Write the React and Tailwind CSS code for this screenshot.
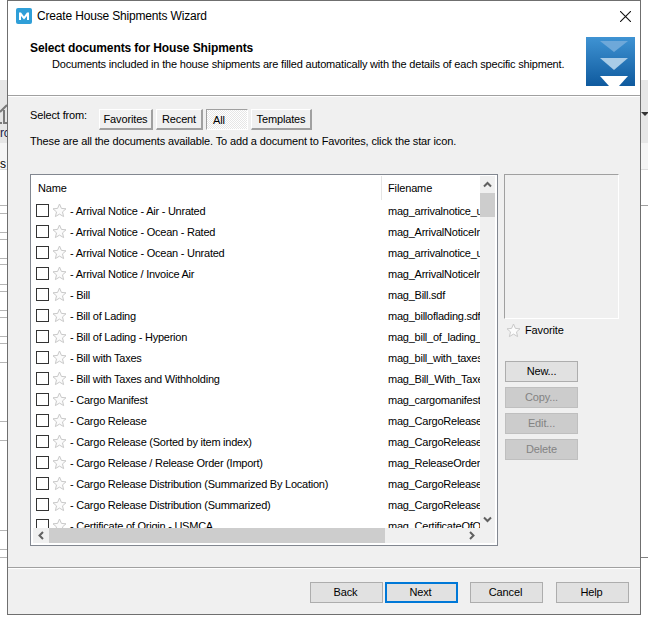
import React from 'react';

const rows = [
  ['Arrival Notice - Air - Unrated', 'mag_arrivalnotice_unrated.sdf'],
  ['Arrival Notice - Ocean - Rated', 'mag_ArrivalNoticeInvoice.sdf'],
  ['Arrival Notice - Ocean - Unrated', 'mag_arrivalnotice_unrated.sdf'],
  ['Arrival Notice / Invoice Air', 'mag_ArrivalNoticeInvoice.sdf'],
  ['Bill', 'mag_Bill.sdf'],
  ['Bill of Lading', 'mag_billoflading.sdf'],
  ['Bill of Lading - Hyperion', 'mag_bill_of_lading_hyperion.sdf'],
  ['Bill with Taxes', 'mag_bill_with_taxes.sdf'],
  ['Bill with Taxes and Withholding', 'mag_Bill_With_Taxes.sdf'],
  ['Cargo Manifest', 'mag_cargomanifest.sdf'],
  ['Cargo Release', 'mag_CargoRelease.sdf'],
  ['Cargo Release (Sorted by item index)', 'mag_CargoRelease.sdf'],
  ['Cargo Release / Release Order (Import)', 'mag_ReleaseOrder.sdf'],
  ['Cargo Release Distribution (Summarized By Location)', 'mag_CargoRelease.sdf'],
  ['Cargo Release Distribution (Summarized)', 'mag_CargoRelease.sdf'],
  ['Certificate of Origin - USMCA', 'mag_CertificateOfOrigin.sdf'],
];

const leftLines = [205, 213, 232, 239, 258, 264, 284, 291, 310, 317, 336, 343, 362, 421, 440, 530, 549, 557];

function Star({ className }) {
  return (
    <svg viewBox="0 0 15 15" className={className} fill="#fbfbfb" stroke="#c9c9c9" strokeWidth="1">
      <path d="M7.5 1 L9.4 5.4 L14 5.8 L10.5 8.9 L11.6 13.6 L7.5 11.1 L3.4 13.6 L4.5 8.9 L1 5.8 L5.6 5.4 Z" />
    </svg>
  );
}

function Chevron({ d, className }) {
  return (
    <svg viewBox="0 0 9 9" className={className} fill="none" stroke="#606060" strokeWidth="2">
      <path d={d} />
    </svg>
  );
}

function TabButton({ label, width, active }) {
  if (active) {
    return (
      <div
        className={`h-[21px] ${width} flex items-center pl-[6px] pt-[2px] border-t border-l border-[#a0a0a0] border-r-white border-b-white border-r border-b bg-[repeating-conic-gradient(#e6e6e6_0_25%,#ffffff_0_50%)] bg-[length:2px_2px]`}
      >
        {label}
      </div>
    );
  }
  return (
    <div className={`h-[21px] ${width} flex items-center justify-center border-t border-l border-white border-r-[#a0a0a0] border-b-[#a0a0a0] border-r-2 border-b-2 bg-[#f0f0f0]`}>
      {label}
    </div>
  );
}

function SideButton({ label, disabled }) {
  return (
    <div
      className={
        disabled
          ? 'w-[73px] h-[21px] flex items-center justify-center border border-[#bfbfbf] bg-[#cccccc] text-[#838383]'
          : 'w-[73px] h-[21px] flex items-center justify-center border border-[#adadad] bg-[#e1e1e1]'
      }
    >
      {label}
    </div>
  );
}

function FooterButton({ label, focused }) {
  return (
    <div
      className={
        focused
          ? 'w-[73px] h-[21px] flex items-center justify-center pr-[2px] border-2 border-[#0078d7] bg-[#e1e1e1]'
          : 'w-[73px] h-[21px] flex items-center justify-center pr-[2px] border border-[#adadad] bg-[#e1e1e1]'
      }
    >
      {label}
    </div>
  );
}

export default function App() {
  return (
    <div className="relative w-[648px] h-[622px] overflow-hidden bg-white text-[11px] tracking-[-0.14px] text-black font-['Liberation_Sans',sans-serif]">
      {/* app behind the dialog */}
      <div className="absolute left-0 top-[80px] w-full h-[63px] bg-[#e6e6e6]" />
      <div className="absolute left-0 top-[143px] w-full h-[27px] bg-[#f5f5f5] border-b border-[#dddddd]" />
      <div className="absolute left-[640px] top-[205px] w-[8px] h-px bg-[#a0a0a0]" />
      <div className="absolute left-[640px] top-[557px] w-[8px] h-px bg-[#808080]" />
      <div className="absolute left-[641px] top-[112px] w-0 h-0 border-x-[4px] border-x-transparent border-t-[4px] border-t-[#333333]" />
      <svg viewBox="0 0 7 30" className="absolute left-0 top-[98px] w-[7px] h-[30px]" fill="none" stroke="#7a7a7a" strokeWidth="2">
        <path d="M0 14 L7 7 M4 12 V25 H7 M0 25 H2" />
      </svg>
      <div className="absolute left-0 top-[124px] text-[12px] text-[#1a1a4a]">rc</div>
      <div className="absolute left-0 top-[155px] text-[12px]">s</div>
      {leftLines.map((y) => (
        <div key={y} className="absolute left-0 w-[7px] h-px bg-[#b5b5b5]" style={{ top: y }} />
      ))}

      {/* dialog */}
      <div className="absolute left-[7px] top-0 w-[634px] h-[615px] border border-[#6f6f6f] bg-[#f0f0f0] flex flex-col">
        <div className="h-[95px] bg-white border-b border-[#a0a0a0] shrink-0 flex flex-col">
          <div className="h-[30px] flex items-center pl-[8px] pr-[9px] shrink-0">
            <svg viewBox="0 0 16 16" className="w-[16px] h-[16px] mr-[5px]">
              <rect width="16" height="16" rx="2" fill="#2f9fd8" />
              <path d="M3 12 V4.5 H5 L8 8.5 L11 4.5 H13 V12 H11 V8 L8 11.5 L5 8 V12 Z" fill="#ffffff" />
            </svg>
            <span className="flex-1 text-[12px] tracking-[-0.17px]">Create House Shipments Wizard</span>
            <svg viewBox="0 0 10 10" className="w-[11px] h-[11px]" stroke="#111111" strokeWidth="1" fill="none">
              <path d="M0 0 L10 10 M10 0 L0 10" />
            </svg>
          </div>
          <div className="flex pl-[22px] pr-[5px]">
            <div className="flex-1 pt-[10px]">
              <div className="font-bold text-[12px] tracking-[-0.1px] leading-[15px]">Select documents for House Shipments</div>
              <div className="pl-[22px] mt-[1px] leading-[15px] whitespace-nowrap tracking-[-0.19px]">
                Documents included in the house shipments are filled automatically with the details of each specific shipment.
              </div>
            </div>
            <svg viewBox="0 0 49 49" className="w-[49px] h-[49px] mt-[6px] shrink-0">
              <defs>
                <linearGradient id="ship" x1="0" y1="0" x2="0" y2="1">
                  <stop offset="0" stopColor="#3f93d3" />
                  <stop offset="1" stopColor="#0f5a9e" />
                </linearGradient>
              </defs>
              <rect width="49" height="49" fill="url(#ship)" />
              <path d="M14 4 H42 L28 15 Z" fill="#6ea8d9" />
              <path d="M14 21 H42 L28 33 Z" fill="#a9cce7" />
              <path d="M14 39 H42 L33 49 H23 Z" fill="#ffffff" />
            </svg>
          </div>
        </div>

        <div className="flex-1 border-t border-white pl-[22px] pr-[20px] pt-[12px] min-h-0">
          <div className="flex h-[21px]">
            <div className="w-[69px] leading-[13px]">Select from:</div>
            <div className="flex gap-[3px]">
              <TabButton label="Favorites" width="w-[54px]" />
              <TabButton label="Recent" width="w-[47px]" />
              <TabButton label="All" width="w-[42px]" active />
              <TabButton label="Templates" width="w-[61px]" />
            </div>
          </div>
          <div className="mt-[4px] leading-[15px]">
            These are all the documents available. To add a document to Favorites, click the star icon.
          </div>

          <div className="flex mt-[25px]">
            <div className="w-[468px] h-[372px] border border-[#828790] p-[1px] bg-white flex flex-col">
              <div className="flex min-h-0 flex-1">
                <div className="flex-1 min-w-0 flex flex-col overflow-hidden">
                  <div className="h-[24px] flex shrink-0">
                    <div className="w-[350px] pl-[6px] flex items-center border-r border-[#e5e5e5]">Name</div>
                    <div className="pl-[6px] flex items-center">Filename</div>
                  </div>
                  <div className="flex-1 overflow-hidden pt-px tracking-[-0.24px]">
                    {rows.map(([name, file]) => (
                      <div key={name} className="h-[21px] flex items-center whitespace-nowrap">
                        <div className="w-[350px] flex items-center pl-[4px] shrink-0">
                          <span className="w-[13px] h-[13px] border border-[#333333] bg-white shrink-0 -mt-[2px]" />
                          <Star className="w-[15px] h-[15px] ml-[3px] mr-[3px] shrink-0 -mt-[3px]" />
                          <span>- {name}</span>
                        </div>
                        <div className="pl-[6px] overflow-hidden flex-1">{file}</div>
                      </div>
                    ))}
                  </div>
                </div>
                <div className="w-[15px] bg-[#f0f0f0] mr-[1px] shrink-0 flex flex-col items-center">
                  <div className="h-[17px] flex items-center justify-center">
                    <Chevron d="M1 6.5 L4.5 3 L8 6.5" className="w-[9px] h-[9px]" />
                  </div>
                  <div className="w-full h-[24px] bg-[#cdcdcd]" />
                  <div className="flex-1" />
                  <div className="h-[17px] flex items-center justify-center">
                    <Chevron d="M1 2.5 L4.5 6 L8 2.5" className="w-[9px] h-[9px]" />
                  </div>
                </div>
              </div>
              <div className="h-[15px] mb-[1px] ml-[1px] mr-[1px] bg-[#f0f0f0] shrink-0 flex items-center">
                <div className="w-[16px] flex justify-center">
                  <Chevron d="M6 1 L2.5 4.5 L6 8" className="w-[9px] h-[9px]" />
                </div>
                <div className="w-[336px] h-full bg-[#cdcdcd]" />
                <div className="flex-1" />
                <div className="w-[18px] mr-[15px] flex justify-center">
                  <Chevron d="M3 1 L6.5 4.5 L3 8" className="w-[9px] h-[9px]" />
                </div>
              </div>
            </div>

            <div className="ml-[6px] w-[115px]">
              <div className="h-[145px] border-t border-l border-[#a0a0a0] border-r-white border-b-white border-r border-b" />
              <div className="flex items-center pl-[2px] mt-[4px] h-[15px]">
                <Star className="w-[15px] h-[15px] mr-[4px]" />
                Favorite
              </div>
              <div className="flex flex-col gap-[5px] mt-[23px] pl-[1px]">
                <SideButton label="New..." />
                <SideButton label="Copy..." disabled />
                <SideButton label="Edit..." disabled />
                <SideButton label="Delete" disabled />
              </div>
            </div>
          </div>
        </div>

        <div className="h-[47px] shrink-0 border-t border-[#a0a0a0]">
          <div className="border-t border-white h-full flex justify-end items-start pr-[11px] pt-[13px]">
            <FooterButton label="Back" />
            <div className="ml-[2px]"><FooterButton label="Next" focused /></div>
            <div className="ml-[12px]"><FooterButton label="Cancel" /></div>
            <div className="ml-[13px]"><FooterButton label="Help" /></div>
          </div>
        </div>
      </div>
    </div>
  );
}
